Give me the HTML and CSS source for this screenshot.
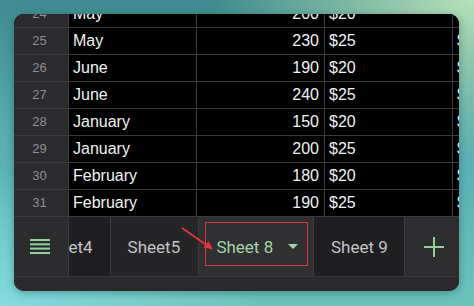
FILE: index.html
```html
<!DOCTYPE html>
<html>
<head>
    <link rel="stylesheet" href="styles.css">
</head>
<body>
    <div class="panel">
        <div class="grid-view">
            <div class="grid">
                <div class="num">24</div><div class="cell">May</div><div class="cell right">200</div><div class="cell">$20</div><div class="cell">$20</div>
                <div class="num">25</div><div class="cell">May</div><div class="cell right">230</div><div class="cell">$25</div><div class="cell">$25</div>
                <div class="num">26</div><div class="cell">June</div><div class="cell right">190</div><div class="cell">$20</div><div class="cell">$20</div>
                <div class="num">27</div><div class="cell">June</div><div class="cell right">240</div><div class="cell">$25</div><div class="cell">$25</div>
                <div class="num">28</div><div class="cell">January</div><div class="cell right">150</div><div class="cell">$20</div><div class="cell">$20</div>
                <div class="num">29</div><div class="cell">January</div><div class="cell right">200</div><div class="cell">$25</div><div class="cell">$25</div>
                <div class="num">30</div><div class="cell">February</div><div class="cell right">180</div><div class="cell">$20</div><div class="cell">$20</div>
                <div class="num">31</div><div class="cell">February</div><div class="cell right">190</div><div class="cell">$25</div><div class="cell">$25</div>
            </div>
        </div>

        <div class="tab-bar">
            <div class="menu-btn">
                <svg width="20" height="15" viewBox="0 0 20 15">
                    <rect x="0" y="0" width="20" height="2" fill="#93cf9c"/>
                    <rect x="0" y="4.3" width="20" height="2" fill="#93cf9c"/>
                    <rect x="0" y="8.6" width="20" height="2" fill="#93cf9c"/>
                    <rect x="0" y="13" width="20" height="2" fill="#93cf9c"/>
                </svg>
            </div>
            <div class="tabs">
                <div class="tab-track">
                    <div class="tab dark">Sheet4</div>
                    <div class="tab mid">Sheet5</div>
                    <div class="tab active">
                        <span>Sheet 8</span>
                        <span class="caret"></span>
                        <div class="highlight"></div>
                    </div>
                    <div class="tab dark">Sheet 9</div>
                </div>
            </div>
            <div class="add-btn">
                <svg width="20" height="20" viewBox="0 0 20 20">
                    <rect x="9" y="0" width="2" height="20" fill="#93cf9c"/>
                    <rect x="0" y="9" width="20" height="2" fill="#93cf9c"/>
                </svg>
            </div>
        </div>
        <div class="footer"></div>

        <svg class="arrow" width="40" height="30" viewBox="0 0 40 30">
            <line x1="2" y1="2" x2="28" y2="20" stroke="#e0363a" stroke-width="1.8"/>
            <polygon points="33,23.5 23.5,21.5 28.5,15" fill="#e0363a"/>
        </svg>
    </div>
</body>
</html>
```

FILE: styles.css
```css
* {
    margin: 0;
    padding: 0;
    box-sizing: border-box;
}

body {
    width: 474px;
    height: 306px;
    overflow: hidden;
    padding: 14px 0 0 14px;
    background:
        radial-gradient(ellipse 260px 160px at 100% 0%, rgba(190, 230, 185, 0.95), rgba(190, 230, 185, 0) 100%),
        radial-gradient(ellipse 260px 140px at 0% 100%, rgba(135, 222, 225, 0.9), rgba(135, 222, 225, 0) 100%),
        linear-gradient(180deg, #3f8b8f 0%, #58aeb2 45%, #6cc4bf 100%);
    font-family: 'Liberation Sans', Arial, sans-serif;
}

.panel {
    position: relative;
    width: 445px;
    height: 277px;
    border-radius: 10px;
    overflow: hidden;
    background: #29292c;
    box-shadow: 0 2px 8px rgba(0, 40, 50, 0.35);
    display: flex;
    flex-direction: column;
}

.grid-view {
    height: 203px;
    overflow: hidden;
    flex-shrink: 0;
    background: #000;
}

.grid {
    margin-top: -13px;
    display: grid;
    grid-template-columns: 55px 128px 128px 128px 60px;
    grid-auto-rows: 27px;
}

.num, .cell {
    border-right: 1px solid #3b3b3d;
    border-bottom: 1px solid #3b3b3d;
    line-height: 26px;
    white-space: nowrap;
    overflow: hidden;
}

.num {
    background: #2b2b2e;
    color: #8f8f92;
    font-size: 13px;
    text-align: center;
    padding-right: 3px;
}

.cell {
    background: #000;
    color: #f2f2f2;
    font-size: 16px;
    padding-left: 4px;
}

.cell.right {
    text-align: right;
    padding-right: 5px;
}

.tab-bar {
    height: 60px;
    display: flex;
    flex-shrink: 0;
    border-bottom: 1px solid #38383b;
    font-family: Roboto, 'Liberation Sans', sans-serif;
    font-size: 17px;
}

.menu-btn {
    width: 55px;
    background: #2c2c2f;
    border-right: 1px solid #3a3a3d;
    display: flex;
    align-items: center;
    justify-content: center;
    padding-right: 2px;
}

.tabs {
    width: 336px;
    overflow: hidden;
}

.tab-track {
    display: flex;
    height: 100%;
    margin-left: -46px;
}

.tab {
    position: relative;
    display: flex;
    align-items: center;
    padding: 0 17px 0 17px;
    color: #c3c3c6;
    border-right: 1px solid #3a3a3d;
    white-space: nowrap;
}

.tab.dark {
    background: #1f1f22;
}

.tab.mid {
    background: #252528;
    width: 89px;
}

.tab.active {
    background: #303033;
    color: #a3d6a4;
    width: 115px;
    padding-right: 14px;
}

.tab:last-child {
    width: 91px;
}

.caret {
    margin-left: 15px;
    width: 0;
    height: 0;
    border-left: 5px solid transparent;
    border-right: 5px solid transparent;
    border-top: 5px solid #a3d6a4;
}

.highlight {
    position: absolute;
    left: 6px;
    top: 5px;
    width: 103px;
    height: 44px;
    border: 1.5px solid #d8393d;
}

.add-btn {
    flex: 1;
    background: #2d2d30;
    display: flex;
    align-items: center;
    justify-content: center;
    padding-left: 3px;
}

.footer {
    flex: 1;
    background: #2a2a2d;
}

.arrow {
    position: absolute;
    left: 166px;
    top: 212px;
}
```
